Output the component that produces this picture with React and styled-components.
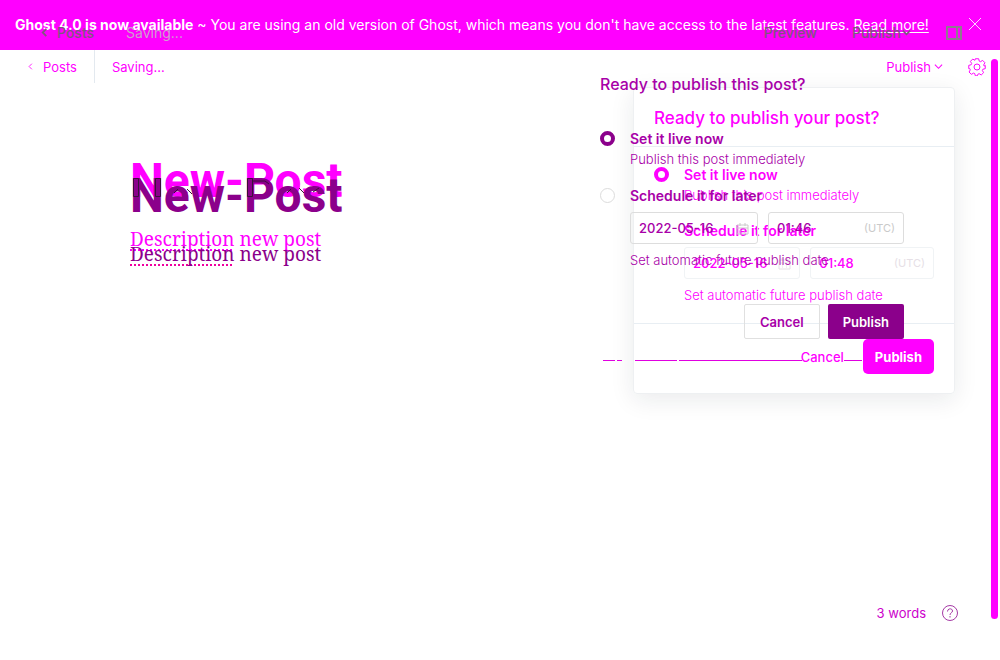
import React from "react";
import styled, { createGlobalStyle } from "styled-components";

const Global = createGlobalStyle`
  * { box-sizing: border-box; }
  body { margin: 0; background: #fff; font-family: Inter, "Liberation Sans", sans-serif; font-size: 13px; color: #ff00ff; }
  button, input { font: inherit; color: inherit; margin: 0; }
  h1, h2, p { margin: 0; }
`;

const bright = "#ff00ff";
const deep = "#a800a8";
const dark = "#8b008b";
const dim = "#80557f";
const pale = "#cf9fcf";

const Page = styled.div`
  position: relative;
  display: flex;
  flex-direction: column;
  min-height: 100vh;
  overflow: hidden;
`;

const Banner = styled.header`
  display: flex;
  align-items: center;
  justify-content: space-between;
  height: 50px;
  padding: 0 18px 2px 15px;
  background: ${bright};
  color: #fff;
  font-size: 14px;
  white-space: nowrap;
`;

const BannerLink = styled.a`
  color: inherit;
  text-decoration: underline;
  text-underline-offset: 2px;
`;

const PlainButton = styled.button`
  display: flex;
  align-items: center;
  gap: ${(p) => p.$gap || 0}px;
  padding: 0;
  border: 0;
  background: none;
  line-height: 20px;
  font-weight: ${(p) => p.$weight || 400};
`;

const Toolbar = styled.nav`
  display: flex;
  align-items: center;
  justify-content: space-between;
  height: 33px;
  padding: 0 14px 0 27px;
`;

const OldToolbar = styled(Toolbar)`
  position: absolute;
  top: 16px;
  left: 0;
  right: 0;
  padding: 0 38px 0 40px;
  color: ${dim};
  font-size: 14px;
`;

const Group = styled.div`
  display: flex;
  align-items: center;
  gap: ${(p) => p.$gap}px;
`;

const BackLink = styled.a`
  display: flex;
  align-items: center;
  gap: ${(p) => p.$gap}px;
  color: inherit;
  text-decoration: none;
  font-weight: ${(p) => p.$weight || 400};
`;

const SaveState = styled.span`
  color: ${(p) => p.$color};
`;

const Rule = styled.span`
  width: 1px;
  height: 33px;
  background: #e3e9ef;
`;

const Editor = styled.main`
  position: relative;
  flex: 1;
  padding: 70px 130px 0;
`;

const Copy = styled.div`
  color: ${bright};
`;

const OldCopy = styled.div`
  position: absolute;
  top: 85px;
  left: 130px;
  color: ${dark};
`;

const Title = styled.h1`
  font-family: Roboto, Inter, sans-serif;
  font-size: 48px;
  line-height: 56px;
  font-weight: 700;
  white-space: nowrap;
`;

const Description = styled.p`
  margin-top: 17px;
  font-family: "Noto Serif", "DejaVu Serif Condensed", "Liberation Serif", serif;
  font-size: 19px;
  line-height: 26px;
  white-space: nowrap;
`;

const Misspelt = styled.span`
  text-decoration: underline dotted 2px ${(p) => p.$line};
  text-underline-offset: 3px;
  text-decoration-skip-ink: none;
`;

const Overlap = styled.svg`
  position: absolute;
  top: 91px;
  left: 130px;
`;

const Status = styled.footer`
  display: flex;
  align-items: center;
  justify-content: flex-end;
  gap: 16px;
  padding: 0 42px 37px 0;
  color: #cc00cc;
  line-height: 20px;
`;

const Scrollbar = styled.div`
  position: absolute;
  top: 59px;
  bottom: 41px;
  right: 2px;
  width: 7px;
  border-radius: 4px;
  background: ${bright};
`;

const Dialog = styled.form`
  position: absolute;
  top: 87px;
  right: 45px;
  width: 322px;
  border: 1px solid #eef0f2;
  border-radius: 4px;
  box-shadow: 0 6px 24px rgba(20, 30, 40, 0.09);
  color: ${bright};
`;

const DialogTitle = styled.h2`
  padding: 17px 20px 14px;
  border-bottom: 1px solid #e8eef3;
  font-size: 17px;
  line-height: 27px;
  font-weight: 500;
`;

const Options = styled.div`
  display: flex;
  flex-direction: column;
  gap: 16px;
  padding: 18px 20px;
`;

const Option = styled.div`
  display: grid;
  grid-template-columns: 15px 1fr;
  column-gap: 15px;
`;

const Radio = styled.input.attrs({ type: "radio" })`
  appearance: none;
  width: 15px;
  height: 15px;
  margin-top: 2px;
  border: 1px solid #dcdcdc;
  border-radius: 50%;
  visibility: ${(p) => (p.$hidden ? "hidden" : "visible")};
  &:checked { border: 4px solid ${(p) => p.$color}; }
`;

const Label = styled.label`
  font-size: 14px;
  font-weight: 600;
  line-height: 20px;
`;

const Hint = styled.p`
  grid-column: 2;
  line-height: 20px;
  font-weight: 300;
  white-space: nowrap;
`;

const Fields = styled.div`
  grid-column: 2;
  display: grid;
  grid-template-columns: 16fr 17fr;
  gap: 10px;
  margin: 6px 0;
`;

const Field = styled.span`
  display: flex;
  align-items: center;
  min-width: 0;
  height: 32px;
  padding: 0 8px;
  border: 1px solid ${(p) => p.$line};
  border-radius: 3px;
  color: ${(p) => p.$unit};
  font-size: 11px;
`;

const FieldInput = styled.input`
  flex: 1;
  min-width: 0;
  width: 0;
  padding: 0;
  border: 0;
  outline: 0;
  background: none;
  font-size: 13px;
  font-weight: 500;
  color: ${(p) => p.$color};
`;

const Actions = styled.div`
  display: flex;
  align-items: center;
  justify-content: flex-end;
  gap: 19px;
  padding: 15px 20px 19px;
  border-top: 1px solid #e8eef3;
`;

const Primary = styled.button`
  height: 35px;
  padding: 0 12px;
  border: 0;
  border-radius: 5px;
  background: ${bright};
  color: #fff;
  font-weight: 700;
`;

const OldDialog = styled.form`
  position: absolute;
  top: 74px;
  right: 96px;
  width: 304px;
  color: ${deep};
`;

const OldTitle = styled.h2`
  font-size: 16px;
  line-height: 20px;
  font-weight: 500;
`;

const OldOptions = styled.div`
  display: flex;
  flex-direction: column;
  gap: 17px;
  margin-top: 35px;
`;

const OldActions = styled.div`
  display: flex;
  justify-content: flex-end;
  gap: 8px;
  margin-top: 34px;
`;

const OldPrimary = styled(Primary)`
  padding: 0 15px;
  border-radius: 2px;
  background: ${dark};
  font-weight: 600;
`;

const OldCancel = styled(OldPrimary)`
  border: 1px solid #e0e0e0;
  background: none;
  color: ${deep};
`;

const Baseline = styled.div`
  position: absolute;
  top: 360px;
  right: 138px;
  display: flex;
  height: 1px;
`;

const Dash = styled.span`
  width: ${(p) => p.$width}px;
  margin-left: ${(p) => p.$gap}px;
  background: #e000e0;
`;

const dashes = [
  { width: 12, gap: 0 },
  { width: 5, gap: 2 },
  { width: 42, gap: 13 },
  { width: 123, gap: 2 },
  { width: 18, gap: 42 },
];

const Chevron = ({ left, size = 9, weight = 1.2 }) => (
  <svg width={size} height={size} viewBox="0 0 10 10" fill="none" stroke="currentColor" strokeWidth={weight} aria-hidden="true">
    <path d={left ? "M7 1 3 5l4 4" : "M1 3l4 4 4-4"} />
  </svg>
);

const Gear = () => (
  <svg width="18" height="18" viewBox="0 0 24 24" fill="none" stroke="currentColor" strokeWidth="1.3" strokeLinejoin="round" aria-hidden="true">
    <path d="M9.800 1h4.400l.8 3.200 1.600.7 2.900-1.700 3.100 3.100-1.700 2.900.7 1.600L23 9.800v4.400l-3.200.8-.7 1.600 1.700 2.900-3.100 3.100-2.900-1.700-1.600.7-.8 2.200H9.800L9 20.800l-1.600-.7-2.900 1.700-3.100-3.100 1.700-2.900-.7-1.600L1 14.200V9.800L4.200 9l.7-1.600-1.700-2.900 3.100-3.100L9.200 3.100z" />
    <circle cx="12" cy="12" r="4" />
  </svg>
);

const Panel = () => (
  <svg width="16" height="14" viewBox="0 0 16 14" fill="none" stroke="#8f7a8f" strokeWidth="2" aria-hidden="true">
    <path d="M1 1h14v12H1zM11 1v12" />
  </svg>
);

const Cross = () => (
  <svg width="14" height="14" viewBox="0 0 14 14" fill="none" stroke="#ffd6ff" aria-hidden="true">
    <path d="M1 1l12 12M13 1 1 13" />
  </svg>
);

const Calendar = ({ color }) => (
  <svg width="13" height="13" viewBox="0 0 13 13" fill="none" stroke={color} aria-hidden="true">
    <path d="M1 3h11v9H1zM1 6h11M4 1v3M9 1v3M4 8h1M8 8h1M4 10h1M8 10h1" />
  </svg>
);

function DateFields({ id, date, time, line, unit, color }) {
  return (
    <Fields>
      <Field $line={line} $unit={unit}>
        <FieldInput aria-label="Publish date" id={`${id}-date`} defaultValue={date} $color={color} />
        <Calendar color={unit} />
      </Field>
      <Field $line={line} $unit={unit}>
        <FieldInput aria-label="Publish time" id={`${id}-time`} defaultValue={time} $color={color} />
        (UTC)
      </Field>
    </Fields>
  );
}

function Choices({ id, color, radio, hideLater, ...fields }) {
  return (
    <>
      <Option>
        <Radio id={`${id}-now`} name={id} defaultChecked $color={radio} />
        <Label htmlFor={`${id}-now`}>Set it live now</Label>
        <Hint>Publish this post immediately</Hint>
      </Option>
      <Option>
        <Radio id={`${id}-later`} name={id} $hidden={hideLater} $color={radio} />
        <Label htmlFor={`${id}-later`}>Schedule it for later</Label>
        <DateFields id={id} color={color} {...fields} />
        <Hint>Set automatic future publish date</Hint>
      </Option>
    </>
  );
}

export default function App() {
  return (
    <Page>
      <Global />
      <Banner>
        <span>
          <strong>Ghost 4.0 is now available</strong> ~ You are using an old version of Ghost, which means you don't have access to the latest features. <BannerLink href="#more">Read more!</BannerLink>
        </span>
        <PlainButton aria-label="Dismiss"><Cross /></PlainButton>
      </Banner>
      <OldToolbar>
        <Group $gap={32}>
          <BackLink href="#posts" $weight={500} $gap={8}><Chevron left weight={2} />Posts</BackLink>
          <SaveState $color={pale}>Saving...</SaveState>
        </Group>
        <Group $gap={35}>
          <PlainButton $weight={500}>Preview</PlainButton>
          <PlainButton $weight={500} $gap={1}>Publish<Chevron weight={2} /></PlainButton>
          <PlainButton aria-label="Toggle panel"><Panel /></PlainButton>
        </Group>
      </OldToolbar>
      <Toolbar>
        <Group $gap={17}>
          <BackLink href="#posts" $gap={9}><Chevron left size={7} />Posts</BackLink>
          <Rule />
          <SaveState $color={bright}>Saving...</SaveState>
        </Group>
        <Group $gap={25}>
          <PlainButton $gap={3}>Publish<Chevron /></PlainButton>
          <PlainButton aria-label="Settings"><Gear /></PlainButton>
        </Group>
      </Toolbar>
      <Editor>
        <Copy>
          <Title>New-Post</Title>
          <Description><Misspelt $line={bright}>Description</Misspelt> new post</Description>
        </Copy>
        <OldCopy>
          <Title as="p">New-Post</Title>
          <Description><Misspelt $line="#f000a0">Description</Misspelt> new post</Description>
        </OldCopy>
        <Overlap width="214" height="28" viewBox="0 0 214 28" fill="none" stroke="#3a103a" aria-hidden="true">
          <path d="M3.500 4.500h5v18h-5zM25.500 4.500h5v18h-5zM117.500 4.500h5v18h-5zM123 7h12l4 3M44 19l4-4M57 15l5 5M157 19l4-4M169 14l5 5M183 18l6-4" />
        </Overlap>
      </Editor>
      <Status>
        <span>3 words</span>
        <PlainButton aria-label="Help">
          <svg width="16" height="16" viewBox="0 0 16 16" fill="none" stroke="#a53aa5" aria-hidden="true">
            <circle cx="8" cy="8" r="7.500" />
            <path d="M5.500 6.500c0-3.500 5-3.500 5-.5 0 2-2.500 1.500-2.500 4M8 11v1.500" />
          </svg>
        </PlainButton>
      </Status>
      <Dialog>
        <DialogTitle>Ready to publish your post?</DialogTitle>
        <Options>
          <Choices id="new" date="2022-05-16" time="01:48" line="#f0f3f5" unit="#e6e0e6" color={bright} radio={bright} hideLater />
        </Options>
        <Actions>
          <PlainButton type="button" $weight={500}>Cancel</PlainButton>
          <Primary type="button">Publish</Primary>
        </Actions>
      </Dialog>
      <OldDialog>
        <OldTitle>Ready to publish this post?</OldTitle>
        <OldOptions>
          <Choices id="old" date="2022-05-16" time="01:46" line="#dddddd" unit="#cacaca" color={deep} radio={dark} />
        </OldOptions>
        <OldActions>
          <OldCancel type="button">Cancel</OldCancel>
          <OldPrimary type="button">Publish</OldPrimary>
        </OldActions>
      </OldDialog>
      <Baseline aria-hidden="true">
        {dashes.map((d, i) => <Dash key={i} $width={d.width} $gap={d.gap} />)}
      </Baseline>
      <Scrollbar />
    </Page>
  );
}
